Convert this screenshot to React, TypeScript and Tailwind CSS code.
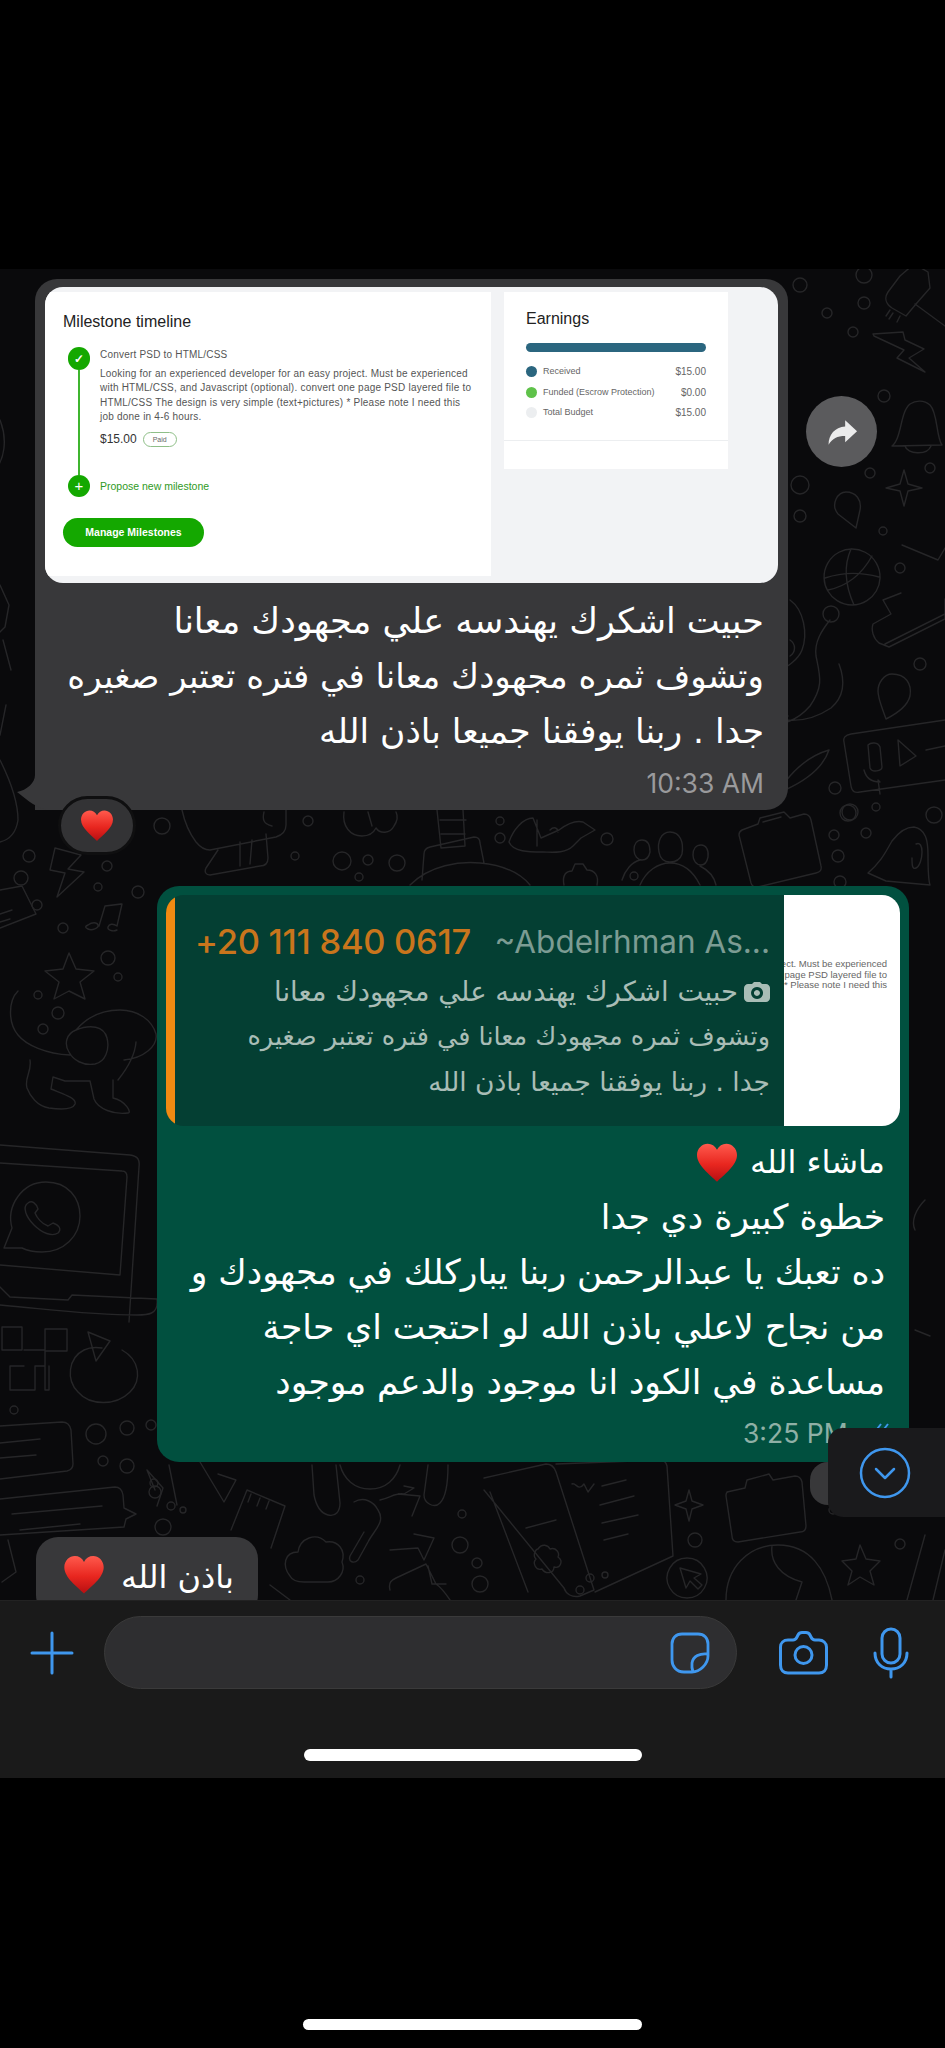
import type { ReactNode } from 'react'

const rings: [number, number, number][] = [
  [29, 856, 6], [21, 878, 7], [37, 905, 5], [63, 928, 5], [107, 866, 5], [98, 887, 4], [138, 892, 6],
  [108, 958, 7], [118, 977, 4], [38, 995, 4], [58, 1013, 6], [43, 1029, 5], [14, 1410, 4],
  [96, 1434, 10], [127, 1428, 7], [151, 1425, 5], [103, 1461, 5], [127, 1466, 7], [154, 1483, 4],
  [162, 826, 8], [308, 821, 5], [295, 856, 4], [342, 861, 9], [368, 860, 5], [397, 863, 8], [359, 877, 4],
  [500, 821, 4], [500, 838, 5], [607, 839, 6], [634, 876, 4], [850, 812, 8], [876, 807, 4], [934, 815, 8],
  [834, 835, 5], [866, 833, 5], [838, 856, 6], [840, 882, 6],
  [800, 285, 7], [864, 275, 8], [864, 303, 6], [827, 313, 5], [853, 332, 5], [884, 396, 6], [870, 473, 5],
  [930, 468, 5], [800, 485, 9], [800, 516, 6], [883, 531, 4], [900, 568, 5], [831, 614, 8], [920, 664, 6],
  [835, 788, 6], [848, 813, 8], [155, 1492, 6], [171, 1506, 4], [163, 1527, 8], [183, 1510, 3],
  [462, 1514, 4], [460, 1545, 8], [477, 1563, 5], [360, 1580, 4], [480, 1584, 8], [580, 1590, 4],
  [590, 1578, 4], [605, 1575, 3], [695, 1540, 7], [833, 1510, 4], [900, 1544, 5], [905, 1500, 5],
  [240, 1575, 6], [200, 1590, 5],
]

const lines = [
  // lightning left
  'M55 848l26 7-13 14 16 3-27 25 8-24-15-3z',
  // music note
  'M88 925c4-3 9-3 10 0s-6 6-10 4-2-3 0-4zM99 926l6-20 17-2-5 22M117 926c-4-3-8-2-9 1s5 5 9 3M105 906l16-2',
  // star
  'M69 953l7 16 18 2-14 11 5 17-16-8-15 8 5-17-14-11 18-2z',
  // dog
  'M18 991c-10 10-10 32 0 44 8 10 28 19 52 20M30 1060c2 12-6 18-3 28 3 8 10 18 22 20 14 2 24 1 26-4 2-6-12-10-24-15l2-12 12 4 25 0 4 18c4 10 20 16 34 14 4 0-2-12-15-15l0-18M118 1080c8-10 17-24 18-38M69 1052c-5-8-3-18 7-22 14-6 28-4 31 8 3 12-2 24-12 26-12 2-22-4-26-12zM76 1030c12-14 28-20 44-20 18 0 32 10 36 24 2 12-12 24-32 26',
  // laptop
  'M0 1145l130 10c8 1 10 5 9 12l-10 155M0 1163l122 8c4 0 5 3 5 6l-7 98-120-10M0 1287l10 10 58 3 4-5 85 4c2 16-10 16-20 16-48 0-90-6-137-10',
  // whatsapp logo
  'M4 1248l8-20c-6-22 10-46 34-46 22 0 34 16 34 34 0 20-16 36-38 36-10 0-16-2-20-4zM28 1203c-6 4-2 14 6 22s18 12 24 8c4-4 1-8-5-10l-5 3c-6-2-11-8-13-13l3-4c-2-6-6-9-10-6z',
  // blocks
  'M2 1327h20v23H2zM45 1329h22v22H45zM24 1350h21v16h-10v24h-25v-24h14M45 1366v24h4v-24',
  // refresh
  'M122 1350c18 10 20 30 8 42-14 14-40 14-52 0-12-12-10-34 6-42 6-3 12-3 18-2M88 1332l22 9-14 20z',
  // cards
  'M0 1426l62-4c6 0 8 3 9 8l2 34c0 4-2 6-6 7l-67 8M0 1443l40-4M0 1458l36-3M0 1499l115-12c4 0 7 2 8 8l1 13 12 6-10 5-2 8-124 8M12 1514l90-8M20 1530l60-6',
  // top-left bits
  'M0 760c10 20 18 40 18 60-2 14-10 20-18 22M0 890l22-4 14 28-36 14M0 914l12-4M0 922l10-3M0 585l9 20-4 22-5 5M0 420c8 20 4 40-5 50M3 640l8 30M0 735l6-30',
  // legs / creature under bubble 1
  'M182 810c3 14 8 24 14 32 4 5 8 8 14 8l66-13c6-2 10-5 10-12v-15M218 850l-12 18c-2 4 0 7 4 7l50-9c6 0 8-4 8-8l-2-24M240 866v-24M250 864l2-24M264 812c-2 8 0 12 8 14',
  // flower
  'M344 812c-2 14 6 24 18 24 8 0 12-4 14-8 4 6 14 6 18-2 4-6 4-10 2-14M368 812l4 14',
  // stem and shape
  'M437 810l4 38 24-2-2-36M440 820h26M441 834h24M422 880l2-26c0-4 2-6 6-7l44-10c4 0 6 2 6 6l4 20M410 885c20-20 50-24 70-22 22 2 40 10 50 22',
  // fish
  'M509 842c4-12 14-24 24-24l8 20 18-8c8-6 16-10 24-8l12 8-14 8-8 8c-8 8-22 6-30 6-14 0-30 0-34-10zM537 820v26M550 830c4-4 8-2 8 2',
  // gear
  'M564 885c-2-10 2-14 8-14l3-7 8 0 4 6c8 0 12 6 10 15',
  // people
  'M670 832c10 0 14 10 12 22-2 6-6 8-12 8-6 0-10-4-11-10-2-10 2-20 11-20zM642 840c6 0 8 6 8 12-1 5-4 8-8 8s-8-4-8-10c0-6 3-10 8-10zM701 845c5 0 8 5 7 12-1 5-4 8-7 8-5 0-8-5-8-10 0-6 3-10 8-10zM640 885c6-14 18-22 30-22 14 0 24 10 30 22M622 880c3-10 10-18 18-20M700 866c8 4 14 10 16 19',
  // camera under bubble 1
  'M742 830l16-6 2-6 24-6 6 6 14-4c4 0 6 2 7 6l10 46c1 4-1 6-5 7l-58 14c-4 1-6-1-7-4l-12-48c0-2 1-4 3-5zM763 822l18-5',
  // bell 2
  'M868 873c14-12 18-22 24-32 6-8 14-14 22-14 12 2 14 14 14 28 0 14 0 24 2 30l-44-4zM916 844c4-2 6 2 6 8s-2 14-6 16-4-4-4-10',
  // brush top right
  'M888 292c-4 6-2 12 4 16l14 8 10-12 14-16-2-16-14-8-14 12zM915 304l30 22M890 310l-4 6M893 313l-4 6M900 316l-3 6',
  // lightning right, bell, sparkle
  'M873 334l30-2 2 8 19 9-15 9 16 14-28-14 7-8-30-14zM892 446c10-8 8-34 18-42 6-4 14-4 20 1 8 8 6 32 12 40l-50 1zM905 446c2 8 22 10 26 0',
  'M904 470l4 14 14 4-14 3-4 15-4-15-14-3 14-4z',
  // pin, ball, check
  'M846 492c10 0 16 8 14 18l-4 18-18-14c-8-10 0-22 8-22z',
  'M852 549a28 28 0 1 0 .1 0zM825 578c18-6 36-6 54-1M851 549c-8 18-6 36 3 56M872 556c-10 18-24 30-44 34',
  'M902 545l36 15 7-12',
  // shoe
  'M901 593l-18 7 8 14-18 10c-2 6 0 14 6 19l10 4 56-28v-20M885 644l60-30',
  // pin 2
  'M892 674c14 0 20 10 18 22-2 8-10 16-24 23-4-12-8-20-8-28 0-8 6-17 14-17z',
  // video msg
  'M945 720l-94 14c-6 1-8 4-7 8l7 44c1 6 4 7 9 6l85-12M868 745c3-3 10-3 12 2l2 20c0 4-10 6-12 1zM864 770c2 8 8 12 16 12l-2-2 2 14M898 740l18 16-16 10zM926 750l19-4',
  // big octopus
  'M790 600c14 10 18 34 12 50-4 10-14 16-24 22M830 620c-8 10-16 22-14 36 4 20 8 30-6 50-14 16-36 22-22 10M785 720c18 2 34-4 46-12 14-12 14-28 8-44M790 640c6 4 6 12 0 16',
  'M785 790c22-10 38-22 44-40-14 4-30 14-44 32',
  // left of bubble 2
  'M155 1490l-8-20 16 18-6 18M169 1465l8 40',
  // brush
  'M231 1530l16-40 38 16-14 42M248 1502l3-8M257 1506l3-8M266 1509l3-8',
  // figure under bubble 2
  'M312 1465l2 30c2 10 6 18 14 20 8 2 12-4 12-12l-4-38M340 1465c4 14 14 24 30 24s26-10 30-24M428 1465l-4 30c0 8 10 14 16 8 6-6 8-22 8-38',
  'M200 1462l24 40 12-22-18-6',
  // arrows
  'M354 1502c10-6 20 0 24 8 8 12-4 20-10 32l-10 18c-4 4-10 2-8-4l14-24M380 1500c10-2 16-8 24-6l10-6-10-2M398 1494l22 2-8 20M414 1534l20 4-10 22-6-12-28 2',
  // cloud
  'M290 1576c-8-10-6-24 8-24 2-14 18-20 28-10 12-2 20 8 16 20 4 10-4 20-14 20h-24c-6 0-12-2-14-6z',
  // book
  'M484 1478l62-14c4 0 8 2 10 8l38 118-14 6c-8 2-14-2-16-8l-80-98M490 1492l38 100M556 1464l104-4c4 0 6 2 7 6l6 90-78 36M526 1528l30-8M572 1484c4-2 6 8 12 0l4 8 6-8M602 1486l24-6M600 1505l34-9M602 1523l36-8M604 1540l24-6',
  'M538 1549c4-6 10-4 12 0 6-2 10 4 8 8 6 4 2 12-4 10 0 6-8 8-12 2-6 2-10-6-6-10-4-4 0-10 2-10z',
  // sparkle, camera bottom, cursor, head
  'M689 1490l3 11 11 4-11 4-3 12-3-12-11-4 11-4z',
  'M727 1492l18-4 2-8 22-6 4 6 22-4c4 0 6 2 7 6l4 44c0 4-2 6-6 6l-62 10c-4 0-6-2-6-6l-6-40c0-2 0-4 2-4z',
  'M687 1558a20 20 0 1 0 .1 0zM680 1568l6 20 4-7 8 8 4-4-8-7 7-4z',
  'M726 1600c0-32 22-55 52-55 32 0 48 24 54 55M772 1546c-2 16 8 30 30 36l-6 18',
  // envelope
  'M390 1590c-2-8 2-10 6-12l30-14 10 20c6 4 10 10 14 16M428 1566l4 18 14 0',
  // bottom left stuff
  'M8 1540l8 32-14 10M270 1585l20 15M125 1545l-14 55M250 1575l-8 25',
  // bottom right star
  'M860 1545l6 14 14 2-10 10 4 14-14-8-12 8 4-14-10-10 14-2zM925 1535l-18 65M945 1550l-12 50',
  // right edge of scroll area
  'M900 1095l-10 18M925 1200c-10 10-14 22-10 30M915 1330l15 6',
]

function Doodles() {
  return (
    <svg
      className="absolute inset-0"
      width={945}
      height={1331}
      viewBox="0 269 945 1331"
      fill="none"
      stroke="#262628"
      strokeWidth={1.4}
      strokeLinecap="round"
      strokeLinejoin="round"
    >
      {rings.map(([x, y, r]) => (
        <circle key={`${x}-${y}`} cx={x} cy={y} r={r} />
      ))}
      {lines.map((d) => (
        <path key={d} d={d} />
      ))}
    </svg>
  )
}

function Heart({ className }: { className: string }) {
  return (
    <svg className={className} viewBox="0 0 32 30" aria-hidden="true">
      <defs>
        <linearGradient id="heart-red" x1="0" y1="0" x2="0" y2="1">
          <stop offset="0" stopColor="#ff5a4d" />
          <stop offset="0.55" stopColor="#e8261f" />
          <stop offset="1" stopColor="#b70f12" />
        </linearGradient>
      </defs>
      <path
        fill="url(#heart-red)"
        d="M16 29C11 24 1 17 1 9c0-5 4-8.500 8-8.500 3 0 5.500 1.500 7 4.500 1.500-3 4-4.500 7-4.500 4 0 8 3.500 8 8.500 0 8-10 15-15 20z"
      />
    </svg>
  )
}

function Line({ children, className = '' }: { children: ReactNode; className?: string }) {
  return <div className={`whitespace-nowrap ${className}`}>{children}</div>
}

function MilestoneShot() {
  return (
    <div className="flex h-[296px] overflow-hidden rounded-[18px] bg-[#f2f3f5] pt-[5px] font-['Liberation_Sans',sans-serif]">
      {/* Left panel */}
      <div className="h-[284px] w-[446px] bg-white pl-[18px] pt-[21px]">
        <div className="text-[16px] leading-[18px] text-[#222]">Milestone timeline</div>
        <div className="mt-[16px] flex h-[150px]">
          <div className="ml-[5px] flex w-[22px] flex-col items-center">
            <div className="flex h-[23px] w-[22px] items-center justify-center rounded-full bg-[#14a800] text-[12px] font-bold text-white">
              ✓
            </div>
            <div className="w-[2px] flex-1 bg-[#3fb52f]" />
            <div className="flex h-[22px] w-[22px] items-center justify-center rounded-full bg-[#14a800] text-[15px] text-white">
              +
            </div>
          </div>
          <div className="ml-[10px] flex flex-col text-[10px] leading-[14.500px] text-[#555]">
            <Line className="mt-[1px] tracking-[0.2px]">Convert PSD to HTML/CSS</Line>
            <div className="mt-[4px] tracking-[0.22px]">
              <Line>Looking for an experienced developer for an easy project. Must be experienced</Line>
              <Line>with HTML/CSS, and Javascript (optional). convert one page PSD layered file to</Line>
              <Line>HTML/CSS The design is very simple (text+pictures) * Please note I need this</Line>
              <Line>job done in 4-6 hours.</Line>
            </div>
            <div className="mt-[7px] flex items-center gap-[6px]">
              <span className="text-[12px] font-medium text-[#333]">$15.00</span>
              <span className="rounded-full border border-[#8fbf88] px-[9px] text-[7px] leading-[13px] text-[#666]">
                Paid
              </span>
            </div>
            <Line className="mt-auto mb-[4px] text-[10.500px] text-[#2f9a24]">Propose new milestone</Line>
          </div>
        </div>
        <div className="mt-[21px] flex h-[29px] w-[141px] items-center justify-center rounded-full bg-[#14a800] text-[10.500px] font-bold text-white">
          Manage Milestones
        </div>
      </div>

      {/* Earnings card */}
      <div className="ml-[13px] h-[177px] w-[224px] bg-white">
        <div className="h-[149px] border-b border-[#eceef0] px-[22px] pt-[17px]">
          <div className="text-[16px] leading-[20px] text-[#222]">Earnings</div>
          <div className="mt-[14px] h-[9px] rounded-full bg-[#2b667f]" />
          <div className="mt-[14px] flex flex-col gap-[9px] text-[9px] leading-[11.500px] text-[#666]">
            <LegendRow dot="bg-[#2b667f]" label="Received" value="$15.00" />
            <LegendRow dot="bg-[#5fc24a]" label="Funded (Escrow Protection)" value="$0.00" />
            <LegendRow dot="bg-[#eceef0]" label="Total Budget" value="$15.00" />
          </div>
        </div>
      </div>
    </div>
  )
}

function LegendRow({ dot, label, value }: { dot: string; label: string; value: string }) {
  return (
    <div className="flex items-center">
      <span className={`h-[11px] w-[11px] rounded-full ${dot}`} />
      <span className="ml-[6px] flex-1">{label}</span>
      <span className="text-[10px]">{value}</span>
    </div>
  )
}

function ReplyQuote() {
  return (
    <div className="mx-[9px] mt-[9px] flex h-[231px] overflow-hidden rounded-[18px] bg-[#043f33]">
      <div className="w-[9px] shrink-0 rounded-l-[9px] bg-[#f08a12]" />
      <div className="flex-1 pl-[20px] pr-[14px]">
        <div className="mt-[29px] flex items-center justify-between whitespace-nowrap font-['Inter',sans-serif] leading-[36px]">
          <span className="text-[34.500px] font-medium tracking-[-0.3px] text-[#c9751c]">+20 111 840 0617</span>
          <span className="text-[31.500px] text-[#7c9c93]">~Abdelrhman As...</span>
        </div>
        <div dir="rtl" className="mt-[9px] text-[26.500px] leading-[45px] text-[#a9bdb6]">
          <Line className="flex items-center gap-[6px] text-[27.500px]">
            <svg className="h-[20px] w-[26px] shrink-0" viewBox="0 0 26 20" aria-hidden="true">
              <path
                fill="#a9bdb6"
                fillRule="evenodd"
                d="M4 2h4l2-2h6l2 2h4c2 0 4 2 4 4v10c0 2-2 4-4 4H4c-2 0-4-2-4-4V6c0-2 2-4 4-4zm9 3a6 6 0 1 0 .1 0zm0 3a3 3 0 1 1-.1 0z"
              />
            </svg>
            حبيت اشكرك يهندسه علي مجهودك معانا
          </Line>
          <Line className="text-[25.500px]">وتشوف ثمره مجهودك معانا في فتره تعتبر صغيره</Line>
          <Line>جدا . ربنا يوفقنا جميعا باذن الله</Line>
        </div>
      </div>
      <div className="flex w-[116px] shrink-0 flex-col items-end overflow-hidden bg-white pt-[64px] pr-[13px] font-['Liberation_Sans',sans-serif] text-[9.500px] leading-[10.500px] text-[#666]">
        <Line>oject. Must be experienced</Line>
        <Line>one page PSD layered file to</Line>
        <Line>) * Please note I need this</Line>
      </div>
    </div>
  )
}

export default function App() {
  return (
    <div className="flex h-[2048px] w-[945px] flex-col overflow-hidden bg-black font-['DejaVu_Sans',sans-serif]">
      <div className="h-[269px] shrink-0" />

      {/* Chat */}
      <div className="relative h-[1331px] shrink-0 overflow-hidden bg-[#0a0a0c]">
        <Doodles />

        <div className="relative flex flex-col pt-[10px]">
          {/* Incoming message */}
          <div className="flex items-start pl-[35px]">
            <div className="relative h-[531px] w-[753px] rounded-[22px] rounded-bl-none bg-[#38383a] px-[10px] pt-[8px]">
              <MilestoneShot />
              <div dir="rtl" className="mt-[11px] pr-[14px] text-[34.500px] leading-[55px] text-white">
                <Line className="text-[35px]">حبيت اشكرك يهندسه علي مجهودك معانا</Line>
                <Line className="text-[34px]">وتشوف ثمره مجهودك معانا في فتره تعتبر صغيره</Line>
                <Line>جدا . ربنا يوفقنا جميعا باذن الله</Line>
              </div>
              <div className="mt-[8px] pr-[14px] text-right font-['Inter',sans-serif] text-[26.500px] leading-[32px] text-[#9a9a9c]">
                10:33 AM
              </div>

              {/* Tail */}
              <svg
                className="absolute left-[-19px] top-[496px] h-[40px] w-[50px]"
                viewBox="0 0 50 40"
                aria-hidden="true"
              >
                <path fill="#38383a" d="M19 0c0 8-8 15-18 17 7 5 14 13 29 18h20V0z" />
              </svg>

              {/* Reaction */}
              <div className="absolute left-[23px] top-[517px] flex h-[59px] w-[78px] items-center justify-center rounded-full border-[3px] border-[#0f0f10] bg-[#333335]">
                <Heart className="h-[32px] w-[36px]" />
              </div>
            </div>
            <div className="ml-[18px] mt-[117px] flex h-[71px] w-[71px] items-center justify-center rounded-full bg-[#5b5b5d]">
              <svg className="h-[38px] w-[38px]" viewBox="0 0 24 24" aria-hidden="true">
                <path fill="#ececec" d="M14 4.500l7.500 7-7.500 7v-4c-5 0-8 1.500-10.500 5.500 0-6.500 4-11 10.500-11.500z" />
              </svg>
            </div>
          </div>

          {/* Outgoing reply */}
          <div className="ml-[157px] mt-[76px] h-[576px] w-[752px] rounded-[22px] bg-[#01503f]">
            <ReplyQuote />
            <div dir="rtl" className="mt-[9px] pr-[24px] text-[34.500px] leading-[55px] text-white">
              <Line className="flex items-center gap-[11px] text-[32px]">
                ماشاء الله
                <Heart className="h-[40px] w-[44px]" />
              </Line>
              <Line>خطوة كبيرة دي جدا</Line>
              <Line>ده تعبك يا عبدالرحمن ربنا يباركلك في مجهودك و</Line>
              <Line>من نجاح لاعلي باذن الله لو احتجت اي حاجة</Line>
              <Line>مساعدة في الكود انا موجود والدعم موجود</Line>
            </div>
            <div className="mt-[7px] pl-[586px] font-['Inter',sans-serif] text-[26.500px] leading-[32px] text-[#8fb0a6]">
              3:25 PM
            </div>
          </div>

          {/* Cut-off incoming message */}
          <div className="ml-[36px] mt-[75px] flex h-[80px] w-[222px] items-start justify-between rounded-[22px] bg-[#38383a] pl-[27px] pr-[24px] pt-[17px] text-[32px] leading-[46px] text-white">
            <Heart className="h-[42px] w-[42px] shrink-0" />
            <span dir="rtl" className="whitespace-nowrap">باذن الله</span>
          </div>
        </div>

        {/* Scroll to bottom */}
        <div className="absolute right-[100px] top-[1193px] h-[43px] w-[35px] rounded-l-[18px] bg-[#38383a]" />
        <svg className="absolute left-[872px] top-[1153px] h-[12px] w-[18px]" viewBox="0 0 18 12" aria-hidden="true">
          <path d="M2 11l7-9M9 11l7-9" stroke="#3f97ee" strokeWidth={2} fill="none" />
        </svg>
        <div className="absolute right-0 top-[1159px] flex h-[89px] w-[117px] items-center rounded-l-[15px] bg-[#1a1a1c] pl-[31px]">
          <svg className="h-[52px] w-[52px]" viewBox="0 0 52 52" fill="none" stroke="#3f97ee" aria-hidden="true">
            <circle cx="26" cy="26" r="24" strokeWidth={2.500} />
            <path d="M17 22l9 9 9-9" strokeWidth={2.500} strokeLinecap="round" strokeLinejoin="round" />
          </svg>
        </div>
      </div>

      {/* Input bar */}
      <div className="flex h-[178px] shrink-0 flex-col items-center border-t border-[#222] bg-[#1a1a1a]">
        <div className="mt-[15px] flex w-full items-center pl-[30px]">
          <svg className="h-[44px] w-[44px]" viewBox="0 0 44 44" stroke="#3f97ee" strokeWidth={3} strokeLinecap="round" aria-hidden="true">
            <path d="M22 2v40M2 22h40" />
          </svg>
          <div className="ml-[30px] flex h-[73px] w-[633px] items-center justify-end rounded-full border border-[#3a3a3a] bg-[#2e2e30] pr-[26px]">
            <svg className="h-[42px] w-[40px]" viewBox="0 0 40 42" fill="none" stroke="#3f97ee" strokeWidth={2.800} strokeLinejoin="round" aria-hidden="true">
              <path d="M12 2h16c6 0 10 4 10 10v12c0 8-8 16-16 16h-8C6 40 2 34 2 28V12C2 6 6 2 12 2z" />
              <path d="M38 22c-8-1-15 2-16 9-.5 4 0 6 1 9" />
            </svg>
          </div>
          <svg className="ml-[42px] h-[44px] w-[49px]" viewBox="0 0 49 44" fill="none" stroke="#3f97ee" strokeWidth={3} aria-hidden="true">
            <path
              strokeLinejoin="round"
              d="M9 9h5c2 0 3-1 4-3l1-2c1-2 2-2.500 4-2.500h4c2 0 3 .5 4 2.500l1 2c1 2 2 3 4 3h4c4 0 7.500 3 7.500 7v18c0 5-3 8-7.500 8H9c-4.500 0-7.500-3-7.500-8V16c0-4 3-7 7.500-7z"
            />
            <circle cx="24.500" cy="24" r="8.500" />
          </svg>
          <svg className="ml-[45px] h-[52px] w-[36px]" viewBox="0 0 36 52" fill="none" stroke="#3f97ee" strokeWidth={3} strokeLinecap="round" aria-hidden="true">
            <rect x="9" y="2" width="18" height="34" rx="9" />
            <path d="M2 26c0 10 7 16 16 16s16-6 16-16M18 42v8" />
          </svg>
        </div>
        <div className="mt-[60px] h-[12px] w-[338px] rounded-full bg-white" />
      </div>

      {/* Screen bottom */}
      <div className="flex flex-1 justify-center pt-[241px]">
        <div className="h-[11px] w-[339px] rounded-full bg-white" />
      </div>
    </div>
  )
}
